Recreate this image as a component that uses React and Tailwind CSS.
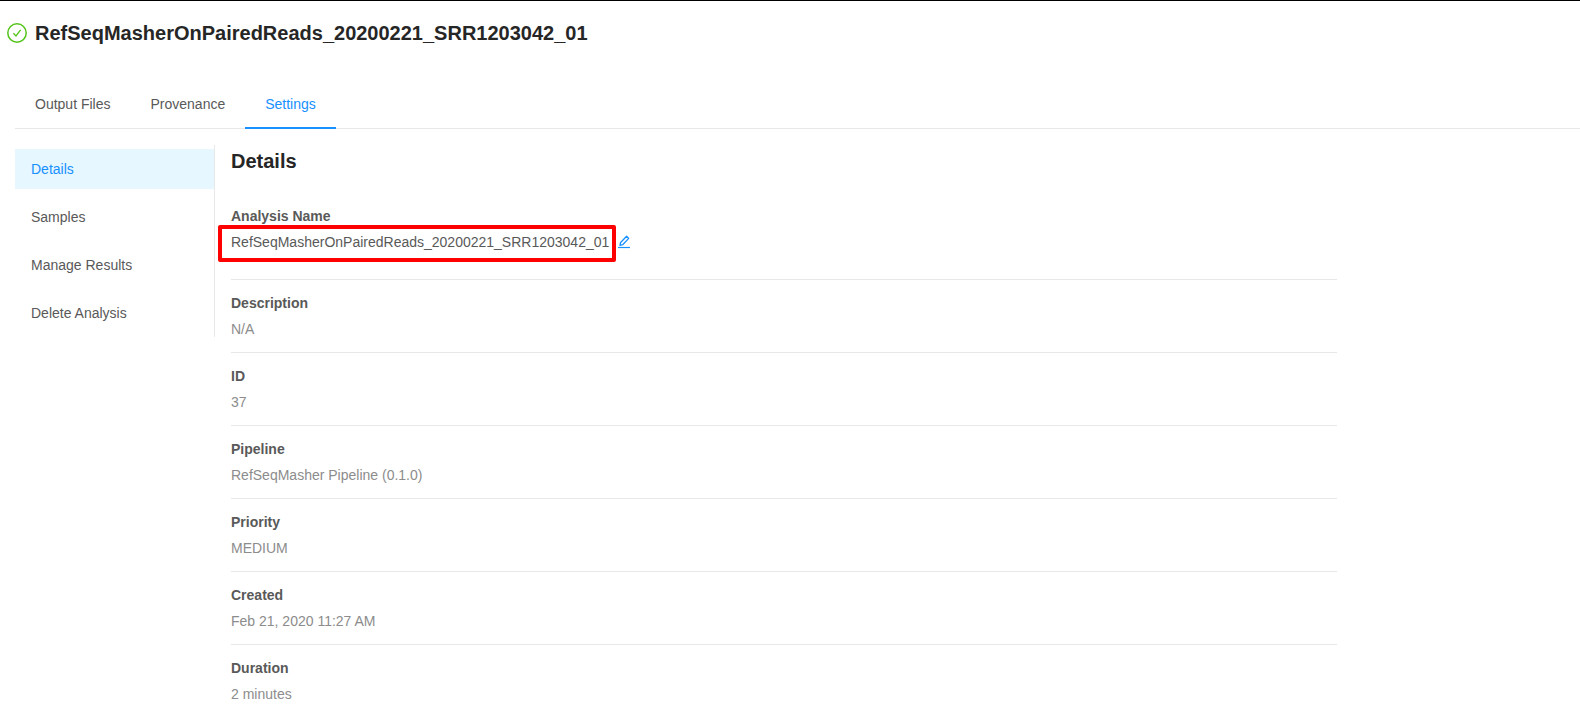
import React from "react";

const NAME = "RefSeqMasherOnPairedReads_20200221_SRR1203042_01";

const TABS = ["Output Files", "Provenance", "Settings"];

const MENU = ["Details", "Samples", "Manage Results", "Delete Analysis"];

const DETAILS = [
  ["Description", "N/A"],
  ["ID", "37"],
  ["Pipeline", "RefSeqMasher Pipeline (0.1.0)"],
  ["Priority", "MEDIUM"],
  ["Created", "Feb 21, 2020 11:27 AM"],
  ["Duration", "2 minutes"],
];

function CompletedIcon() {
  return (
    <svg
      viewBox="0 0 22 22"
      className="h-[22px] w-[22px] shrink-0 text-[#52c41a]"
      fill="none"
      stroke="currentColor"
      aria-hidden="true"
    >
      <circle cx="11" cy="11" r="9.2" strokeWidth="1.5" />
      <path d="M7.4 11.2 L10 13.9 L14.6 7.8" strokeWidth="1.3" />
    </svg>
  );
}

function EditIcon() {
  return (
    <svg viewBox="0 0 14 14" className="h-[14px] w-[14px]" fill="none" stroke="currentColor" aria-hidden="true">
      <path d="M3 10.4 L3.6 7.5 L9.6 1.3 L11.7 3.4 L5.7 9.7 Z" strokeWidth="1.3" strokeLinejoin="round" />
      <path d="M1 12.5 H13" strokeWidth="1.2" />
    </svg>
  );
}

function Tabs() {
  return (
    <nav className="ml-[15px] mt-[34px] flex border-b border-[#e8e8e8]">
      {TABS.map((tab) => (
        <a
          key={tab}
          href="#"
          className={
            tab === "Settings"
              ? "-mb-px border-b-2 border-[#1890ff] px-5 pb-3 pt-3 text-[#1890ff]"
              : "-mb-px border-b-2 border-transparent px-5 pb-3 pt-3"
          }
        >
          {tab}
        </a>
      ))}
    </nav>
  );
}

function SideMenu() {
  return (
    <nav className="flex w-[200px] shrink-0 flex-col gap-2 border-r border-[#e8e8e8] py-1">
      {MENU.map((item) => (
        <a
          key={item}
          href="#"
          className={
            item === "Details"
              ? "bg-[#e6f7ff] px-4 leading-[40px] text-[#1890ff]"
              : "px-4 leading-[40px]"
          }
        >
          {item}
        </a>
      ))}
    </nav>
  );
}

function Details() {
  return (
    <main className="min-w-0 flex-1 pl-4">
      <h2 className="mt-[2px] text-[20px] font-bold leading-[28px] text-[#262626]">Details</h2>
      <dl className="mt-[18px] w-[82%]">
        <div className="border-b border-[#e8e8e8] pb-[26px] pt-3">
          <dt className="font-bold">Analysis Name</dt>
          <dd className="mt-1 flex items-center gap-2">
            <span className="relative">
              {NAME}
              <span className="pointer-events-none absolute -bottom-[9px] -left-[13px] -right-[7px] -top-[6px] rounded-[2px] border-4 border-[#ff0000]" />
            </span>
            <button type="button" aria-label="Edit" className="text-[#1890ff]">
              <EditIcon />
            </button>
          </dd>
        </div>
        {DETAILS.map(([label, value]) => (
          <div key={label} className="border-b border-[#e8e8e8] py-3 last:border-b-0">
            <dt className="font-bold">{label}</dt>
            <dd className="mt-1 text-[#8c8c8c]">{value}</dd>
          </div>
        ))}
      </dl>
    </main>
  );
}

export default function App() {
  return (
    <div className="border-t border-black bg-white font-['Liberation_Sans',Arial,sans-serif] text-[14px] leading-[22px] text-[#595959]">
      <header className="flex items-center gap-[7px] pl-[6px] pt-[18px]">
        <CompletedIcon />
        <h1 className="text-[20px] font-bold leading-[28px] text-[#262626]">{NAME}</h1>
      </header>
      <Tabs />
      <div className="ml-[15px] mt-4 flex items-start">
        <SideMenu />
        <Details />
      </div>
    </div>
  );
}
